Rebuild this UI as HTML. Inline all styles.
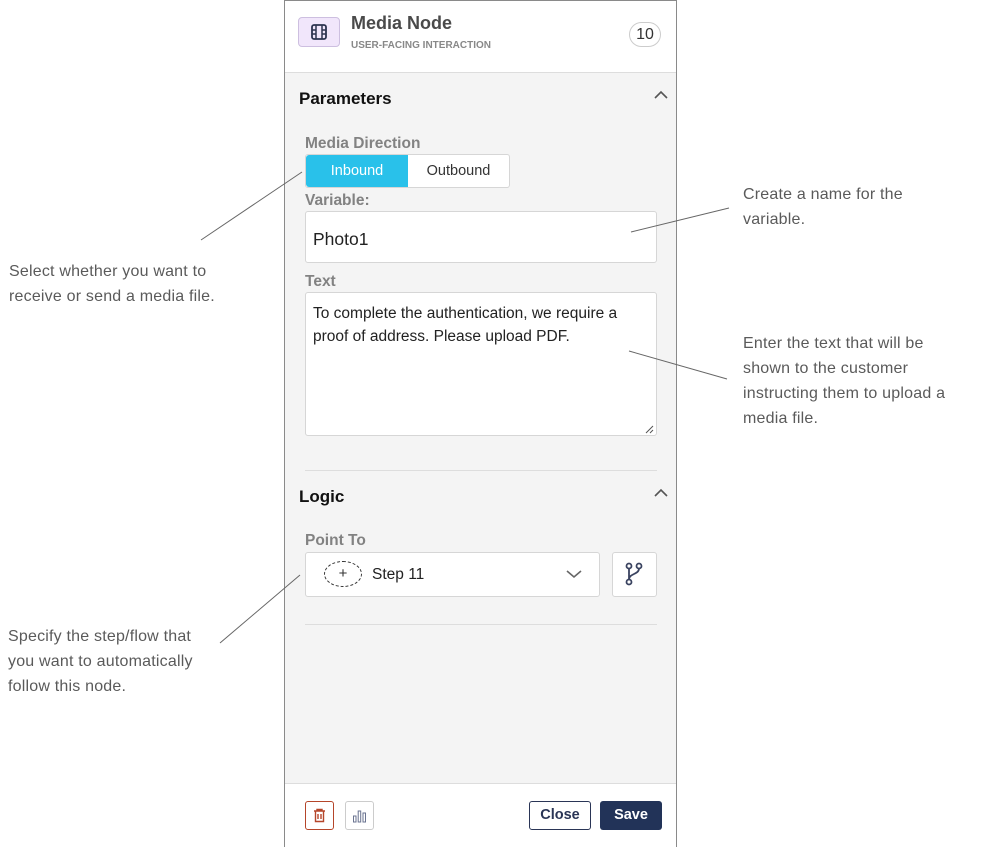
<!DOCTYPE html>
<html><head><style>
body{margin:0;width:1002px;height:847px;background:#fff;position:relative;font-family:"Liberation Sans",sans-serif;overflow:hidden}
.a{position:absolute}
.note{position:absolute;font-family:"Liberation Sans",sans-serif;font-size:16px;line-height:25px;color:#5a5a5a;letter-spacing:0.2px}
.lbl{position:absolute;font-size:15.5px;font-weight:bold;color:#828282}
.box{position:absolute;background:#fff;border:1px solid #d6d6d6;border-radius:3px;box-sizing:border-box}
</style></head><body>
<div class="a" style="left:284px;top:0;width:393px;height:847px;border:1px solid #8a8a8a;box-sizing:border-box;background:#f4f4f4"></div>
<div class="a" style="left:285px;top:1px;width:391px;height:71px;background:#fff;border-bottom:1px solid #ddd"></div>
<div class="a" style="left:298px;top:17px;width:42px;height:30px;background:#f1e6fb;border:1px solid #cdbfe0;border-radius:4px;box-sizing:border-box"></div>
<svg class="a" style="left:310px;top:23px" width="18" height="18" viewBox="0 0 18 18"><rect x="2" y="2" width="14" height="14" rx="2" fill="none" stroke="#2d3450" stroke-width="1.8"/><path d="M6 2v14M12 2v14M2 7h4M2 11h4M12 7h4M12 11h4" stroke="#2d3450" stroke-width="1.5"/></svg>
<div class="a" style="left:351px;top:13px;font-size:18px;font-weight:bold;color:#4a4a4a">Media Node</div>
<div class="a" style="left:351px;top:40px;font-size:10px;font-weight:bold;color:#888">USER-FACING INTERACTION</div>
<div class="a" style="left:629px;top:22px;width:32px;height:25px;border:1px solid #ccc;border-radius:13px;box-sizing:border-box;text-align:center;line-height:23px;font-size:16px;color:#333">10</div>
<div class="a" style="left:299px;top:89px;font-size:17px;font-weight:bold;color:#111">Parameters</div>
<svg class="a" style="left:654px;top:90px" width="14" height="10"><path d="M1 8l6-6 6 6" fill="none" stroke="#555" stroke-width="1.6"/></svg>
<div class="lbl" style="left:305px;top:135px">Media Direction</div>
<div class="box" style="left:305px;top:154px;width:205px;height:34px;"></div>
<div class="a" style="left:306px;top:155px;width:102px;height:32px;background:#29c1ea;border-radius:3px 0 0 3px;color:#fff;text-align:center;line-height:32px;font-size:14.5px">Inbound</div>
<div class="a" style="left:408px;top:155px;width:101px;height:32px;color:#333;text-align:center;line-height:32px;font-size:14.5px">Outbound</div>
<div class="lbl" style="left:305px;top:192px">Variable:</div>
<div class="box" style="left:305px;top:211px;width:352px;height:52px;padding:17px 7px;font-size:17.5px;color:#222">Photo1</div>
<div class="lbl" style="left:305px;top:273px">Text</div>
<div class="box" style="left:305px;top:292px;width:352px;height:144px;padding:9px 7px;font-size:15.5px;line-height:23px;color:#222"><div style="width:330px">To complete the authentication, we require a proof of address. Please upload PDF.</div></div>
<svg class="a" style="left:644px;top:424px" width="10" height="10"><path d="M9 2L2 9M9 6L6 9" stroke="#555"/></svg>
<div class="a" style="left:305px;top:470px;width:352px;height:1px;background:#ddd"></div>
<div class="a" style="left:299px;top:487px;font-size:17px;font-weight:bold;color:#111">Logic</div>
<svg class="a" style="left:654px;top:488px" width="14" height="10"><path d="M1 8l6-6 6 6" fill="none" stroke="#555" stroke-width="1.6"/></svg>
<div class="lbl" style="left:305px;top:532px">Point To</div>
<div class="box" style="left:305px;top:552px;width:295px;height:45px"></div>
<div class="a" style="left:324px;top:561px;width:38px;height:26px;border:1.5px dashed #333;border-radius:50%;box-sizing:border-box;text-align:center;line-height:23px;font-size:15px;color:#333">+</div>
<div class="a" style="left:372px;top:566px;font-size:15.5px;color:#222">Step 11</div>
<svg class="a" style="left:566px;top:569px" width="16" height="10"><path d="M1 2l7 6 7-6" fill="none" stroke="#666" stroke-width="1.6"/></svg>
<div class="box" style="left:612px;top:552px;width:45px;height:45px"></div>
<svg class="a" style="left:622px;top:561px" width="24" height="26" viewBox="0 0 24 26"><circle cx="7" cy="5" r="2.5" fill="none" stroke="#3a4360" stroke-width="1.8"/><circle cx="17" cy="5" r="2.5" fill="none" stroke="#3a4360" stroke-width="1.8"/><circle cx="7" cy="21" r="2.5" fill="none" stroke="#3a4360" stroke-width="1.8"/><path d="M7 7.5v11M17 7.5c0 6-10 5-10 11" fill="none" stroke="#3a4360" stroke-width="1.8"/></svg>
<div class="a" style="left:305px;top:624px;width:352px;height:1px;background:#ddd"></div>
<div class="a" style="left:285px;top:783px;width:391px;height:63px;background:#fff;border-top:1px solid #ddd"></div>
<div class="a" style="left:305px;top:801px;width:29px;height:29px;border:1px solid #b5452a;border-radius:3px;box-sizing:border-box"></div>
<svg class="a" style="left:312px;top:808px" width="15" height="15"><path d="M2 3h11M5 3V1.5h5V3M3.5 3.5v10h8v-10M6 6v5M9 6v5" fill="none" stroke="#b5452a" stroke-width="1.4"/></svg>
<div class="a" style="left:345px;top:801px;width:29px;height:29px;border:1px solid #ccc;border-radius:3px;box-sizing:border-box"></div>
<svg class="a" style="left:352px;top:808px" width="15" height="15"><rect x="1.5" y="8" width="2.5" height="6" fill="none" stroke="#6a7390"/><rect x="6.2" y="3" width="2.5" height="11" fill="none" stroke="#6a7390"/><rect x="11" y="5" width="2.5" height="9" fill="none" stroke="#6a7390"/></svg>
<div class="a" style="left:529px;top:801px;width:62px;height:29px;border:1px solid #2a3556;border-radius:3px;box-sizing:border-box;text-align:center;line-height:27px;font-size:14.5px;font-weight:bold;color:#2a3556">Close</div>
<div class="a" style="left:600px;top:801px;width:62px;height:29px;background:#223358;border-radius:3px;text-align:center;line-height:29px;font-size:14.5px;font-weight:bold;color:#fff">Save</div>
<svg class="a" style="left:0;top:0" width="1002" height="847"><g stroke="#666" stroke-width="1"><line x1="201" y1="240" x2="302" y2="172"/><line x1="631" y1="232" x2="729" y2="208"/><line x1="629" y1="351" x2="727" y2="379"/><line x1="220" y1="643" x2="300" y2="575"/></g></svg>
<div class="note" style="left:9px;top:259px">Select whether you want to<br>receive or send a media file.</div>
<div class="note" style="left:743px;top:182px">Create a name for the<br>variable.</div>
<div class="note" style="left:743px;top:331px">Enter the text that will be<br>shown to the customer<br>instructing them to upload a<br>media file.</div>
<div class="note" style="left:8px;top:624px">Specify the step/flow that<br>you want to automatically<br>follow this node.</div>
</body></html>
